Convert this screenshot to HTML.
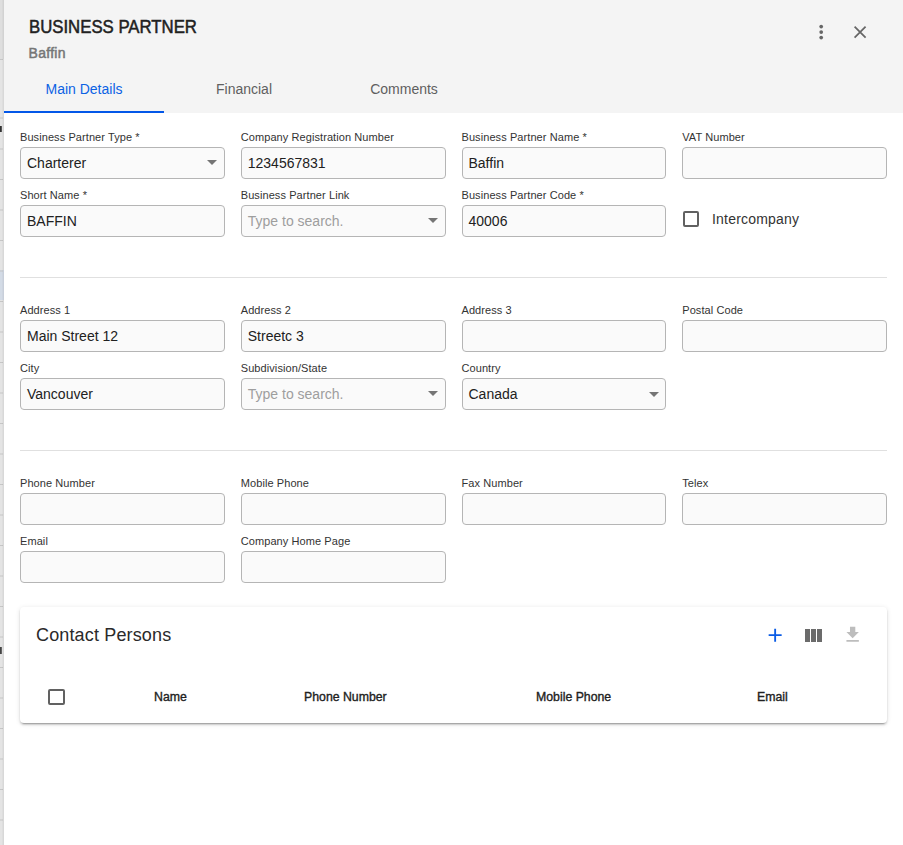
<!DOCTYPE html>
<html><head><meta charset="utf-8">
<style>
*{box-sizing:border-box;margin:0;padding:0}
html,body{width:903px;height:845px;overflow:hidden;background:#fff;font-family:"Liberation Sans",sans-serif;color:#212121;font-variant-ligatures:none}
.bgstrip{position:absolute;left:0;top:0;width:4px;height:845px;background:#e6e6e6}
.drawer{position:absolute;left:4px;top:0;width:899px;height:845px;background:#fff}
.header{position:absolute;left:0;top:0;width:899px;height:113px;background:#f4f4f4}
.title{position:absolute;left:24.5px;top:17px;font-size:18px;font-weight:normal;-webkit-text-stroke:0.5px #212121;color:#212121;white-space:nowrap;transform:scaleX(0.931);transform-origin:0 0}
.sub{position:absolute;left:24.5px;top:45px;font-size:14px;font-weight:normal;-webkit-text-stroke:0.5px #767676;color:#767676;font-variant-ligatures:none;letter-spacing:0.3px}
.tab{position:absolute;top:80.5px;width:160px;text-align:center;font-size:14px;color:#5f5f5f}
.tab.active{color:#0b62e4}
.ink{position:absolute;left:0;top:111px;width:160px;height:2px;background:#0357e8}
.lbl{position:absolute;font-size:11px;letter-spacing:0.08px;color:#333;white-space:nowrap}
.box{position:absolute;height:32px;border:1px solid #b5b5b5;border-radius:4px;background:#fafafa;font-size:14px;line-height:30px;padding-left:6px;color:#212121;white-space:nowrap}
.ph{color:#9e9e9e}
.caret{position:absolute;right:7px;top:12px;width:0;height:0;border-left:5px solid transparent;border-right:5px solid transparent;border-top:5px solid #757575}
.hr{position:absolute;left:16px;width:867px;height:1px;background:#e0e0e0}
.cb{position:absolute;width:16.6px;height:16.6px;border:2px solid #616161;border-radius:2px}
.card{position:absolute;left:20px;top:607px;width:867px;height:116px;background:#fff;border-radius:4px;box-shadow:0 3px 1px -2px rgba(0,0,0,.2),0 2px 2px 0 rgba(0,0,0,.14),0 1px 5px 0 rgba(0,0,0,.12)}
.ctitle{position:absolute;left:16px;top:17.5px;font-size:18px;color:#2a2a2a;letter-spacing:0.15px}
.th{position:absolute;top:82.5px;font-size:12.3px;font-weight:normal;-webkit-text-stroke:0.35px #212121;color:#212121}
</style></head><body>
<svg style="position:absolute;left:0;top:0" width="4" height="845" viewBox="0 0 4 845"><rect x="0" y="0" width="4" height="845" fill="#e4e4e4"/><rect x="0" y="0" width="4" height="59" fill="#dedede"/><rect x="0" y="270" width="4" height="30" fill="#d3dbe6"/><rect x="0" y="59.0" width="3" height="1" fill="#c6c6c6"/><rect x="0" y="117.5" width="3" height="1" fill="#c6c6c6"/><rect x="0" y="148.5" width="3" height="1" fill="#c6c6c6"/><rect x="0" y="179.0" width="3" height="1" fill="#c6c6c6"/><rect x="0" y="209.5" width="3" height="1" fill="#c6c6c6"/><rect x="0" y="240.0" width="3" height="1" fill="#c6c6c6"/><rect x="0" y="270.5" width="3" height="1" fill="#c6c6c6"/><rect x="0" y="301.0" width="3" height="1" fill="#c6c6c6"/><rect x="0" y="331.5" width="3" height="1" fill="#c6c6c6"/><rect x="0" y="362.0" width="3" height="1" fill="#c6c6c6"/><rect x="0" y="392.5" width="3" height="1" fill="#c6c6c6"/><rect x="0" y="423.0" width="3" height="1" fill="#c6c6c6"/><rect x="0" y="453.5" width="3" height="1" fill="#c6c6c6"/><rect x="0" y="484.0" width="3" height="1" fill="#c6c6c6"/><rect x="0" y="514.5" width="3" height="1" fill="#c6c6c6"/><rect x="0" y="545.0" width="3" height="1" fill="#c6c6c6"/><rect x="0" y="575.5" width="3" height="1" fill="#c6c6c6"/><rect x="0" y="606.0" width="3" height="1" fill="#c6c6c6"/><rect x="0" y="636.5" width="3" height="1" fill="#c6c6c6"/><rect x="0" y="667.0" width="3" height="1" fill="#c6c6c6"/><rect x="0" y="697.5" width="3" height="1" fill="#c6c6c6"/><rect x="0" y="728.0" width="3" height="1" fill="#c6c6c6"/><rect x="0" y="758.5" width="3" height="1" fill="#c6c6c6"/><rect x="0" y="789.0" width="3" height="1" fill="#c6c6c6"/><rect x="0" y="819.5" width="3" height="1" fill="#c6c6c6"/><rect x="2.5" y="0" width="1.5" height="845" fill="#000" fill-opacity="0.05"/><rect x="0" y="126" width="1.8" height="6" fill="#333"/><rect x="0" y="647" width="1.8" height="7" fill="#444"/></svg>

<div class="drawer">
  <div class="header">
    <div class="title">BUSINESS PARTNER</div>
    <div class="sub">Baffin</div>
    <div class="tab active" style="left:0">Main Details</div>
    <div class="tab" style="left:160px">Financial</div>
    <div class="tab" style="left:320px">Comments</div>
    <div class="ink"></div>
  </div>
</div>
<!--FORM-->
<div class="lbl" style="left:20px;top:131px">Business Partner Type *</div>
<div class="box" style="left:20px;top:147px;width:204.75px">Charterer<i class="caret"></i></div>
<div class="lbl" style="left:240.75px;top:131px">Company Registration Number</div>
<div class="box" style="left:240.75px;top:147px;width:204.75px">1234567831</div>
<div class="lbl" style="left:461.5px;top:131px">Business Partner Name *</div>
<div class="box" style="left:461.5px;top:147px;width:204.75px">Baffin</div>
<div class="lbl" style="left:682.25px;top:131px">VAT Number</div>
<div class="box" style="left:682.25px;top:147px;width:204.75px"></div>
<div class="lbl" style="left:20px;top:189px">Short Name *</div>
<div class="box" style="left:20px;top:205px;width:204.75px">BAFFIN</div>
<div class="lbl" style="left:240.75px;top:189px">Business Partner Link</div>
<div class="box" style="left:240.75px;top:205px;width:204.75px"><span class="ph">Type to search.</span><i class="caret"></i></div>
<div class="lbl" style="left:461.5px;top:189px">Business Partner Code *</div>
<div class="box" style="left:461.5px;top:205px;width:204.75px">40006</div>
<div class="lbl" style="left:20px;top:304px">Address 1</div>
<div class="box" style="left:20px;top:320px;width:204.75px">Main Street 12</div>
<div class="lbl" style="left:240.75px;top:304px">Address 2</div>
<div class="box" style="left:240.75px;top:320px;width:204.75px">Streetc 3</div>
<div class="lbl" style="left:461.5px;top:304px">Address 3</div>
<div class="box" style="left:461.5px;top:320px;width:204.75px"></div>
<div class="lbl" style="left:682.25px;top:304px">Postal Code</div>
<div class="box" style="left:682.25px;top:320px;width:204.75px"></div>
<div class="lbl" style="left:20px;top:362px">City</div>
<div class="box" style="left:20px;top:378px;width:204.75px">Vancouver</div>
<div class="lbl" style="left:240.75px;top:362px">Subdivision/State</div>
<div class="box" style="left:240.75px;top:378px;width:204.75px"><span class="ph">Type to search.</span><i class="caret"></i></div>
<div class="lbl" style="left:461.5px;top:362px">Country</div>
<div class="box" style="left:461.5px;top:378px;width:204.75px">Canada<i class="caret" style="right:6px;top:13px"></i></div>
<div class="lbl" style="left:20px;top:477px">Phone Number</div>
<div class="box" style="left:20px;top:493px;width:204.75px"></div>
<div class="lbl" style="left:240.75px;top:477px">Mobile Phone</div>
<div class="box" style="left:240.75px;top:493px;width:204.75px"></div>
<div class="lbl" style="left:461.5px;top:477px">Fax Number</div>
<div class="box" style="left:461.5px;top:493px;width:204.75px"></div>
<div class="lbl" style="left:682.25px;top:477px">Telex</div>
<div class="box" style="left:682.25px;top:493px;width:204.75px"></div>
<div class="lbl" style="left:20px;top:535px">Email</div>
<div class="box" style="left:20px;top:551px;width:204.75px"></div>
<div class="lbl" style="left:240.75px;top:535px">Company Home Page</div>
<div class="box" style="left:240.75px;top:551px;width:204.75px"></div>
<!--/FORM-->
<div class="hr" style="left:20px;top:277px;width:867px"></div>
<div class="hr" style="left:20px;top:450px;width:867px"></div>
<div class="cb" style="left:682.8px;top:210.8px"></div>
<div style="position:absolute;left:712px;top:211px;font-size:14px;color:#333;letter-spacing:0.2px">Intercompany</div>
<div class="card">
  <div class="ctitle">Contact Persons</div>
  <svg style="position:absolute;left:744px;top:17px" width="22.3" height="22.3" viewBox="0 0 24 24"><path d="M19 13h-6v6h-2v-6H5v-2h6V5h2v6h6v2z" fill="#0b5ce5"/></svg>
  <svg style="position:absolute;left:780.8px;top:16.9px" width="24" height="24" viewBox="0 0 24 24"><path d="M10 18h5V5h-5v13zm-6 0h5V5H4v13zM16 5v13h5V5h-5z" fill="#6b6b6b"/></svg>
  <svg style="position:absolute;left:821.6px;top:17.3px" width="21.3" height="21.3" viewBox="0 0 24 24"><path d="M19 9h-4V3H9v6H5l7 7 7-7zM5 18v2h14v-2H5z" fill="#bdbdbd"/></svg>
  <div class="cb" style="left:28px;top:81.8px"></div>
  <div class="th" style="left:134px">Name</div>
  <div class="th" style="left:284px">Phone Number</div>
  <div class="th" style="left:516px">Mobile Phone</div>
  <div class="th" style="left:737px">Email</div>
</div>
<svg style="position:absolute;left:0;top:0" width="903" height="60" viewBox="0 0 903 60"><g fill="#666"><circle cx="821.2" cy="26.6" r="1.85"/><circle cx="821.2" cy="32.1" r="1.85"/><circle cx="821.2" cy="37.6" r="1.85"/></g><path d="M854.6 26.6L865.6 37.6M865.6 26.6L854.6 37.6" stroke="#666" stroke-width="1.75" fill="none"/></svg>
</body></html>
